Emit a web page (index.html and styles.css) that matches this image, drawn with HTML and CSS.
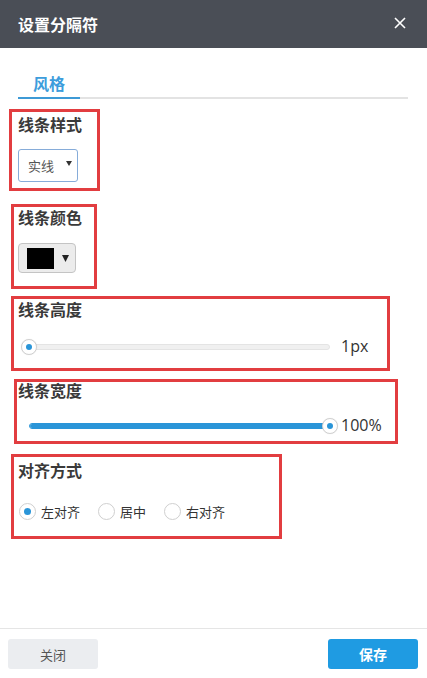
FILE: index.html
```html
<!DOCTYPE html>
<html lang="zh">
<head>
<meta charset="utf-8">
<title>设置分隔符</title>
<link rel="stylesheet" href="styles.css">
</head>
<body>
<div class="dialog">
  <header class="header">
    <span class="title">设置分隔符</span>
    <svg class="close" width="12" height="12" viewBox="0 0 12 12"><path d="M1 1 L11 11 M11 1 L1 11" stroke="#fff" stroke-width="1.6" fill="none"/></svg>
  </header>
  <div class="tabs"><span class="tab">风格</span></div>

  <section class="box box1">
    <div class="label">线条样式</div>
    <div class="select"><span>实线</span><svg class="caret" width="6" height="5" viewBox="0 0 6 5"><path d="M0 0 H6 L3 5 Z" fill="#333"/></svg></div>
  </section>

  <section class="box box2">
    <div class="label">线条颜色</div>
    <div class="picker"><span class="swatch"></span><svg class="tri" width="7" height="7" viewBox="0 0 7 7"><path d="M0 0 H7 L3.5 7 Z" fill="#222"/></svg></div>
  </section>

  <section class="box box3">
    <div class="label">线条高度</div>
    <div class="slider-row">
      <div class="slider"><div class="track"></div><div class="thumb" style="left:0px"></div></div>
      <span class="val">1px</span>
    </div>
  </section>

  <section class="box box4">
    <div class="label">线条宽度</div>
    <div class="slider-row">
      <div class="slider"><div class="track"><div class="fill" style="width:100%"></div></div><div class="thumb" style="left:301px"></div></div>
      <span class="val">100%</span>
    </div>
  </section>

  <section class="box box5">
    <div class="label">对齐方式</div>
    <div class="radios">
      <label class="radio"><span class="dot on"></span>左对齐</label>
      <label class="radio"><span class="dot"></span>居中</label>
      <label class="radio"><span class="dot"></span>右对齐</label>
    </div>
  </section>

  <footer class="footer">
    <button class="btn btn-close">关闭</button>
    <button class="btn btn-save">保存</button>
  </footer>
</div>
</body>
</html>
```

FILE: styles.css
```css
* { box-sizing: border-box; }
html, body { margin: 0; padding: 0; }
body {
  width: 427px;
  height: 678px;
  background: #fff;
  font-family: "Noto Sans CJK SC", "Microsoft YaHei", sans-serif;
  color: #333;
}
.dialog {
  height: 678px;
  display: flex;
  flex-direction: column;
}
.header {
  height: 48px;
  background: #4a4e56;
  display: flex;
  align-items: center;
  justify-content: space-between;
  padding: 0 21px 0 18px;
  flex-shrink: 0;
}
.title {
  color: #fff;
  font-size: 16px;
  font-weight: bold;
  line-height: 20px;
}
.close { display: block; margin-top: -2px; }
.tabs {
  margin: 24px 19px 0 18px;
  border-bottom: 2px solid #e3e3e3;
  display: flex;
  height: 27px;
}
.tab {
  width: 62px;
  text-align: center;
  color: #3d9ddc;
  font-size: 16px;
  font-weight: bold;
  line-height: 22px;
  border-bottom: 2px solid #3d9ad6;
  margin-bottom: -2px;
  padding-bottom: 3px;
}
.box {
  border: 3px solid #e23d40;
  flex-shrink: 0;
}
.label {
  font-size: 16px;
  font-weight: bold;
  line-height: 20px;
  color: #3a3a3a;
}
.box1 { margin: 10px 0 0 9px; width: 91px; height: 82px; padding: 2px 0 0 6px; }
.box2 { margin: 13px 0 0 11px; width: 86px; height: 85px; padding: 0 0 0 4px; }
.box3 { margin: 7px 0 0 11px; width: 379px; height: 75px; padding: 0 0 0 4px; }
.box4 { margin: 8px 0 0 14px; width: 384px; height: 65px; padding: 0 0 0 1px; }
.box4 .label { margin-top: -2px; }
.box5 { margin: 10px 0 0 11px; width: 271px; height: 85px; padding: 3px 0 0 4px; }

.select {
  margin-top: 15px;
  width: 60px;
  height: 33px;
  border: 1px solid #86acd9;
  border-radius: 3px;
  display: flex;
  align-items: center;
  padding-left: 9px;
  font-size: 13px;
  color: #555;
}
.caret {
  display: block;
  margin-left: 12px;
  margin-top: -5px;
}
.picker {
  margin-top: 16px;
  width: 58px;
  height: 30px;
  border: 1px solid #c4c4c4;
  background: #ececec;
  border-radius: 4px;
  display: flex;
  align-items: center;
  padding-left: 8px;
}
.swatch {
  width: 27px;
  height: 21px;
  background: #000;
}
.tri { margin-left: 8px; }

.slider-row {
  display: flex;
  align-items: center;
  height: 18px;
}
.box3 .slider-row { margin-top: 19px; margin-left: 3px; }
.box4 .slider-row { margin-top: 17px; margin-left: 3px; }
.slider {
  position: relative;
  width: 317px;
  height: 18px;
}
.track {
  position: absolute;
  left: 8px;
  right: 8px;
  top: 6px;
  height: 6px;
  background: #f0f0f0;
  border: 1px solid #e4e4e4;
  border-radius: 3px;
  overflow: hidden;
}
.fill {
  height: 100%;
  background: #2a95d8;
}
.box4 .track { border-color: #2a95d8; }
.thumb {
  position: absolute;
  top: 1px;
  width: 16px;
  height: 16px;
  border-radius: 50%;
  background: #fff;
  border: 1px solid #d0d0d0;
  box-shadow: 0 0 1px rgba(0,0,0,0.1);
}
.thumb::after {
  content: "";
  position: absolute;
  left: 4px;
  top: 4px;
  width: 6px;
  height: 6px;
  border-radius: 50%;
  background: #2a95d8;
}
.val {
  margin-left: 3px;
  margin-top: -3px;
  font-family: "Open Sans", "Noto Sans", sans-serif;
  font-size: 16px;
  color: #333;
}

.radios {
  margin-top: 22px;
  display: flex;
  align-items: center;
  padding-left: 1px;
}
.radio {
  display: flex;
  align-items: center;
  font-size: 13px;
  color: #333;
  margin-right: 18px;
}
.dot {
  width: 17px;
  height: 17px;
  border-radius: 50%;
  border: 1px solid #cfcfcf;
  background: #fff;
  margin-right: 5px;
  position: relative;
}
.dot.on::after {
  content: "";
  position: absolute;
  left: 4px;
  top: 4px;
  width: 7px;
  height: 7px;
  border-radius: 50%;
  background: #2a95d8;
}

.footer {
  margin-top: auto;
  border-top: 1px solid #e5e5e5;
  padding: 10px 9px 9px 8px;
  display: flex;
  justify-content: space-between;
  flex-shrink: 0;
}
.btn {
  width: 90px;
  height: 30px;
  border: none;
  border-radius: 3px;
  font-family: "Noto Sans CJK SC", sans-serif;
  font-size: 13px;
}
.btn-close { background: #ebedf0; color: #555; }
.btn-save { background: #1f9be2; color: #fff; font-weight: bold; font-size: 14px; }
```
